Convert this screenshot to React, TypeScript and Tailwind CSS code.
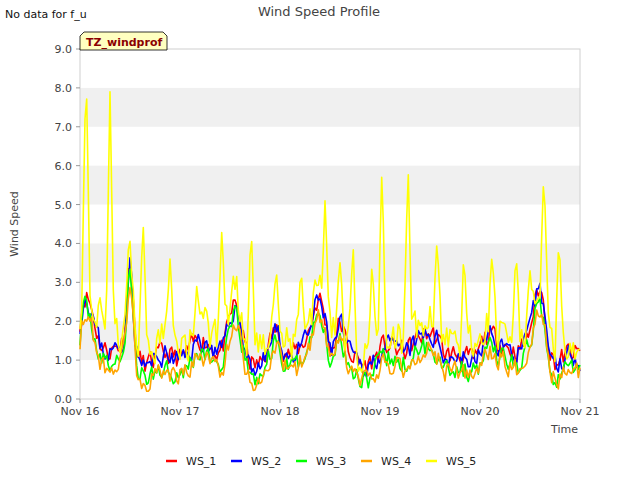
const X0 = 80, X1 = 580, Y0 = 49, Y1 = 399;
const N = 300;

function rng(seed: number) {
  let s = seed;
  return () => {
    s = (s * 16807) % 2147483647;
    return s / 2147483647;
  };
}

const bumps: [number, number, number][] = [
  [0.03, 0.9, 0.04], [0.1, 0.8, 0.05], [0.5, 2.2, 0.03], [1.55, 1.1, 0.06], [2.4, 1.2, 0.06],
  [2.6, 0.8, 0.04], [3.55, 0.5, 0.08], [4.05, 0.4, 0.06], [4.6, 1.6, 0.06], [1.95, 0.5, 0.05],
];

function base(t: number) {
  let v = 1.1 + 0.2 * Math.sin(t * 6.2) + 0.15 * Math.sin(t * 17);
  for (const [c, h, w] of bumps) v += h * Math.exp(-((t - c) ** 2) / (2 * w * w));
  return v;
}

const spikes: [number, number][] = [
  [86, 8.6], [110, 7.9], [143, 4.7], [170, 3.6], [197, 3.0], [222, 4.5], [251, 4.6], [276, 3.4],
  [301, 3.4], [325, 5.1], [353, 4.1], [382, 6.1], [408, 6.1], [437, 4.1], [464, 3.9], [492, 3.7],
  [516, 3.8], [544, 5.9], [559, 4.3], [100, 2.6], [130, 3.2], [340, 3.5], [372, 3.5], [530, 3.3],
];

function series(seed: number, off: number, amp: number, yellow = false) {
  const r = rng(seed);
  const pts: string[] = [];
  let prev = 0;
  for (let i = 0; i <= N; i++) {
    const t = (i / N) * 5;
    const x = X0 + (i / N) * (X1 - X0);
    prev = 0.35 * prev + 0.65 * (r() - 0.5) * amp * 2;
    let v = base(t) + off + prev;
    if (yellow) {
      v = base(t) + 0.4 + prev * 1.5;
      for (const [sx, h] of spikes) {
        const d = Math.abs(x - sx);
        if (d < 4) v = Math.max(v, h - (h - v) * (d / 4));
      }
    }
    v = Math.max(0.2, Math.min(8.9, v));
    pts.push(`${x.toFixed(1)},${(Y1 - (v / 9) * (Y1 - Y0)).toFixed(1)}`);
  }
  return pts.join(" ");
}

const lines = [
  { name: "WS_1", color: "#ff0000", pts: series(11, 0.1, 0.4) },
  { name: "WS_2", color: "#0000ff", pts: series(23, 0.05, 0.4) },
  { name: "WS_3", color: "#00ff00", pts: series(37, -0.25, 0.4) },
  { name: "WS_4", color: "#ffa500", pts: series(53, -0.35, 0.4) },
  { name: "WS_5", color: "#ffff00", pts: series(71, 0, 0.5, true) },
];

const yOf = (v: number) => Y1 - (v / 9) * (Y1 - Y0);

export default function App() {
  return (
    <div className="w-[640px] h-[480px] bg-white relative overflow-hidden" style={{ fontFamily: '"DejaVu Sans", sans-serif' }}>
      <svg width="640" height="480" className="absolute inset-0">
        {[1, 3, 5, 7].map((v) => (
          <rect key={v} x={X0} y={yOf(v + 1)} width={X1 - X0} height={yOf(v) - yOf(v + 1)} fill="#f0f0f0" />
        ))}
        <rect x={X0} y={Y0} width={X1 - X0} height={Y1 - Y0} fill="none" stroke="#d0d0d0" />
        {Array.from({ length: 10 }, (_, v) => (
          <g key={v}>
            <line x1={X0 - 4} x2={X0} y1={yOf(v)} y2={yOf(v)} stroke="#999" />
            <text x={X0 - 8} y={yOf(v) + 4} fontSize="11" fill="#444" textAnchor="end">{v.toFixed(1)}</text>
          </g>
        ))}
        {["Nov 16", "Nov 17", "Nov 18", "Nov 19", "Nov 20", "Nov 21"].map((l, i) => (
          <g key={l}>
            <line x1={X0 + i * 100} x2={X0 + i * 100} y1={Y1} y2={Y1 + 4} stroke="#999" />
            <text x={X0 + i * 100} y={Y1 + 16} fontSize="11" fill="#444" textAnchor="middle">{l}</text>
          </g>
        ))}
        {lines.map((l) => (
          <polyline key={l.name} points={l.pts} fill="none" stroke={l.color} strokeWidth="1.6" strokeLinejoin="round" />
        ))}
        <text x="319" y="16" fontSize="13" fill="#444" textAnchor="middle">Wind Speed Profile</text>
        <text x="5" y="18" fontSize="11" fill="#111">No data for f_u</text>
        <text x="18" y="224" fontSize="11" fill="#444" textAnchor="middle" transform="rotate(-90 18 224)">Wind Speed</text>
        <text x="578" y="433" fontSize="11" fill="#444" textAnchor="end">Time</text>
        <polygon points="84,32 163,32 167,36 167,50 80,50 80,36" fill="#ffffc0" stroke="#000" strokeWidth="0.8" />
        <text x="86" y="46" fontSize="11" fontWeight="bold" fill="#8b0000">TZ_windprof</text>
        {lines.map((l, i) => (
          <g key={l.name}>
            <line x1={166 + i * 65} x2={177 + i * 65} y1={461} y2={461} stroke={l.color} strokeWidth="2.5" />
            <text x={186 + i * 65} y={465} fontSize="11" fill="#222">{l.name}</text>
          </g>
        ))}
      </svg>
    </div>
  );
}
